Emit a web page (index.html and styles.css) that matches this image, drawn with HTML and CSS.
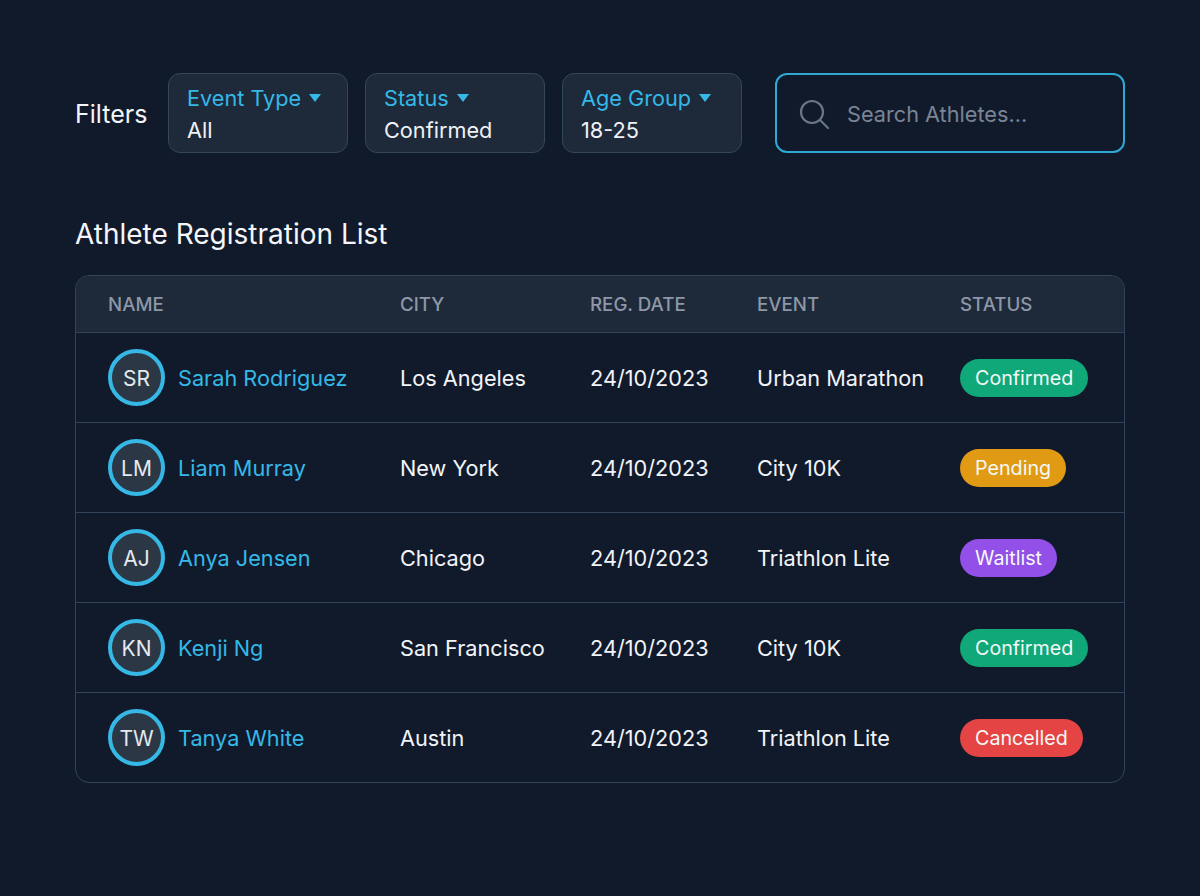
FILE: index.html
```html
<!DOCTYPE html>
<html lang="en">
<head>
    <meta charset="UTF-8">
    <meta name="viewport" content="width=device-width, initial-scale=1.0">
    <title>Athlete Registration List</title>
    <link rel="stylesheet" href="styles.css">
</head>
<body>
    <div class="container">
        <div class="filter-bar">
            <span class="filter-label">Filters</span>
            <div class="filter-box">
                <div class="filter-name">Event Type <span class="caret"></span></div>
                <div class="filter-value">All</div>
            </div>
            <div class="filter-box">
                <div class="filter-name">Status <span class="caret"></span></div>
                <div class="filter-value">Confirmed</div>
            </div>
            <div class="filter-box">
                <div class="filter-name">Age Group <span class="caret"></span></div>
                <div class="filter-value">18-25</div>
            </div>
            <div class="search-box">
                <svg class="search-icon" width="32" height="32" viewBox="0 0 32 32" fill="none" stroke="#6b7686" stroke-width="2.2" stroke-linecap="round">
                    <circle cx="14" cy="14" r="11"/>
                    <path d="M22 22l8 8"/>
                </svg>
                <span class="search-text">Search Athletes...</span>
            </div>
        </div>

        <h2 class="list-title">Athlete Registration List</h2>

        <div class="table-wrap">
            <table class="athlete-table">
                <colgroup>
                    <col class="col-name">
                    <col class="col-city">
                    <col class="col-date">
                    <col class="col-event">
                    <col>
                </colgroup>
                <thead>
                    <tr>
                        <th>NAME</th>
                        <th>CITY</th>
                        <th>REG. DATE</th>
                        <th>EVENT</th>
                        <th>STATUS</th>
                    </tr>
                </thead>
                <tbody>
                    <tr>
                        <td><div class="athlete"><span class="avatar">SR</span><span class="athlete-name">Sarah Rodriguez</span></div></td>
                        <td>Los Angeles</td>
                        <td>24/10/2023</td>
                        <td>Urban Marathon</td>
                        <td><span class="badge confirmed">Confirmed</span></td>
                    </tr>
                    <tr>
                        <td><div class="athlete"><span class="avatar">LM</span><span class="athlete-name">Liam Murray</span></div></td>
                        <td>New York</td>
                        <td>24/10/2023</td>
                        <td>City 10K</td>
                        <td><span class="badge pending">Pending</span></td>
                    </tr>
                    <tr>
                        <td><div class="athlete"><span class="avatar">AJ</span><span class="athlete-name">Anya Jensen</span></div></td>
                        <td>Chicago</td>
                        <td>24/10/2023</td>
                        <td>Triathlon Lite</td>
                        <td><span class="badge waitlist">Waitlist</span></td>
                    </tr>
                    <tr>
                        <td><div class="athlete"><span class="avatar">KN</span><span class="athlete-name">Kenji Ng</span></div></td>
                        <td>San Francisco</td>
                        <td>24/10/2023</td>
                        <td>City 10K</td>
                        <td><span class="badge confirmed">Confirmed</span></td>
                    </tr>
                    <tr>
                        <td><div class="athlete"><span class="avatar">TW</span><span class="athlete-name">Tanya White</span></div></td>
                        <td>Austin</td>
                        <td>24/10/2023</td>
                        <td>Triathlon Lite</td>
                        <td><span class="badge cancelled">Cancelled</span></td>
                    </tr>
                </tbody>
            </table>
        </div>
    </div>
</body>
</html>
```

FILE: styles.css
```css
* {
    margin: 0;
    padding: 0;
    box-sizing: border-box;
}

body {
    font-family: Inter, "Liberation Sans", sans-serif;
    background-color: #111a2b;
    color: #f1f4f8;
    height: 896px;
    overflow: hidden;
}

.container {
    padding: 73px 75px 0;
}

.filter-bar {
    display: flex;
    align-items: center;
    height: 80px;
}

.filter-label {
    padding-top: 2px;
    font-size: 25px;
    color: #f4f6fa;
    width: 93px;
}

.filter-box {
    width: 180px;
    height: 80px;
    margin-right: 17px;
    padding: 8px 18px;
    background-color: #1e2a3a;
    border: 1px solid #35455a;
    border-radius: 12px;
    font-size: 21.7px;
    line-height: 32px;
}

.filter-name {
    color: #35b8e6;
}

.caret {
    display: inline-block;
    width: 0;
    height: 0;
    margin-left: 2px;
    vertical-align: 4px;
    border-left: 6.5px solid transparent;
    border-right: 6.5px solid transparent;
    border-top: 8px solid #35b8e6;
}

.filter-value {
    color: #eef1f6;
}

.search-box {
    display: flex;
    align-items: center;
    width: 350px;
    height: 80px;
    margin-left: 16px;
    padding-left: 21px;
    padding-top: 2px;
    background-color: #111a2b;
    border: 2px solid #2fa9d4;
    border-radius: 12px;
}

.search-icon {
    margin-right: 17px;
}

.search-text {
    font-size: 21.7px;
    color: #7a8494;
}

.list-title {
    margin-top: 63px;
    font-size: 28px;
    line-height: 36px;
    font-weight: 400;
    color: #f4f6fa;
}

.table-wrap {
    margin-top: 23px;
    border: 1px solid #33435a;
    border-radius: 14px;
    overflow: hidden;
}

.athlete-table {
    width: 100%;
    border-collapse: collapse;
    table-layout: fixed;
}

.col-name {
    width: 324px;
}

.col-city {
    width: 190px;
}

.col-date {
    width: 167px;
}

.col-event {
    width: 203px;
}

.athlete-table th {
    height: 56px;
    text-align: left;
    padding: 2px 0 0;
    font-size: 18.7px;
    font-weight: 500;
    color: #8d97a7;
    background-color: #1e2a3a;
}

.athlete-table td {
    height: 90px;
    padding-top: 1px;
    font-size: 21.7px;
    color: #f1f4f8;
    border-top: 1px solid #33435a;
}

.athlete-table th:first-child,
.athlete-table td:first-child {
    padding-left: 32px;
}

.athlete {
    display: flex;
    align-items: center;
}

.avatar {
    display: flex;
    align-items: center;
    justify-content: center;
    width: 57px;
    height: 57px;
    margin-right: 13px;
    padding-top: 2px;
    background-color: #2c3746;
    border: 4px solid #35b8e6;
    border-radius: 50%;
    font-size: 21px;
    font-weight: 400;
    color: #e6e9ee;
}

.athlete-name {
    color: #35b8e6;
}

.badge {
    display: inline-block;
    height: 38px;
    padding: 0 15px;
    border-radius: 19px;
    font-size: 19.7px;
    line-height: 38px;
    color: #f4f8f6;
    vertical-align: middle;
}

.confirmed {
    background-color: #10a878;
}

.pending {
    background-color: #e09a14;
}

.waitlist {
    background-color: #9350e8;
}

.cancelled {
    background-color: #e54444;
}
```
